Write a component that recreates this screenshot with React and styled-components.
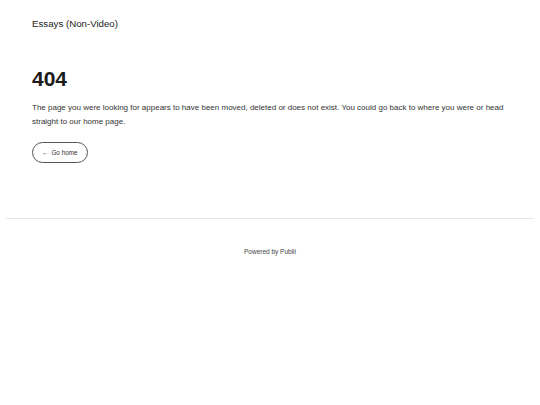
import React from "react";
import styled, { createGlobalStyle } from "styled-components";

const GlobalStyle = createGlobalStyle`
  html, body {
    margin: 0;
    padding: 0;
    background: #ffffff;
  }
  body {
    font-family: "Liberation Sans", Arial, Helvetica, sans-serif;
    color: #222222;
  }
`;

const Page = styled.div`
  width: 540px;
  min-height: 405px;
`;

const Header = styled.header`
  padding: 17px 32px 0;
`;

const SiteName = styled.a`
  display: block;
  font-size: 9.7px;
  line-height: 14px;
  color: #222222;
  text-decoration: none;
`;

const Main = styled.main`
  padding: 0 32px;
`;

const Title = styled.h1`
  margin: 36px 0 0;
  font-size: 21px;
  line-height: 24px;
  font-weight: 700;
  color: #1b1b1b;
`;

const Text = styled.p`
  margin: 10px 0 0;
  font-size: 8px;
  line-height: 14px;
  color: #333333;
`;

const HomeButton = styled.a`
  display: inline-flex;
  align-items: center;
  gap: 3px;
  margin-top: 13px;
  height: 21px;
  box-sizing: border-box;
  padding: 0 9px;
  border: 1px solid #555555;
  border-radius: 999px;
  font-size: 6.4px;
  color: #333333;
  text-decoration: none;
`;

const Footer = styled.footer`
  margin: 55px 6px 0;
  border-top: 1px solid #e6e6e6;
  padding-top: 28px;
  text-align: center;
`;

const Credit = styled.a`
  display: block;
  font-size: 6.5px;
  line-height: 10px;
  color: #444444;
  text-decoration: none;
`;

export default function App() {
  return (
    <Page>
      <GlobalStyle />
      <Header>
        <SiteName href="#">Essays (Non-Video)</SiteName>
      </Header>
      <Main>
        <Title>404</Title>
        <Text>
          The page you were looking for appears to have been moved, deleted or
          does not exist. You could go back to where you were or head straight
          to our home page.
        </Text>
        <HomeButton href="#">
          <span>←</span>
          <span>Go home</span>
        </HomeButton>
      </Main>
      <Footer>
        <Credit href="#">Powered by Publii</Credit>
      </Footer>
    </Page>
  );
}
